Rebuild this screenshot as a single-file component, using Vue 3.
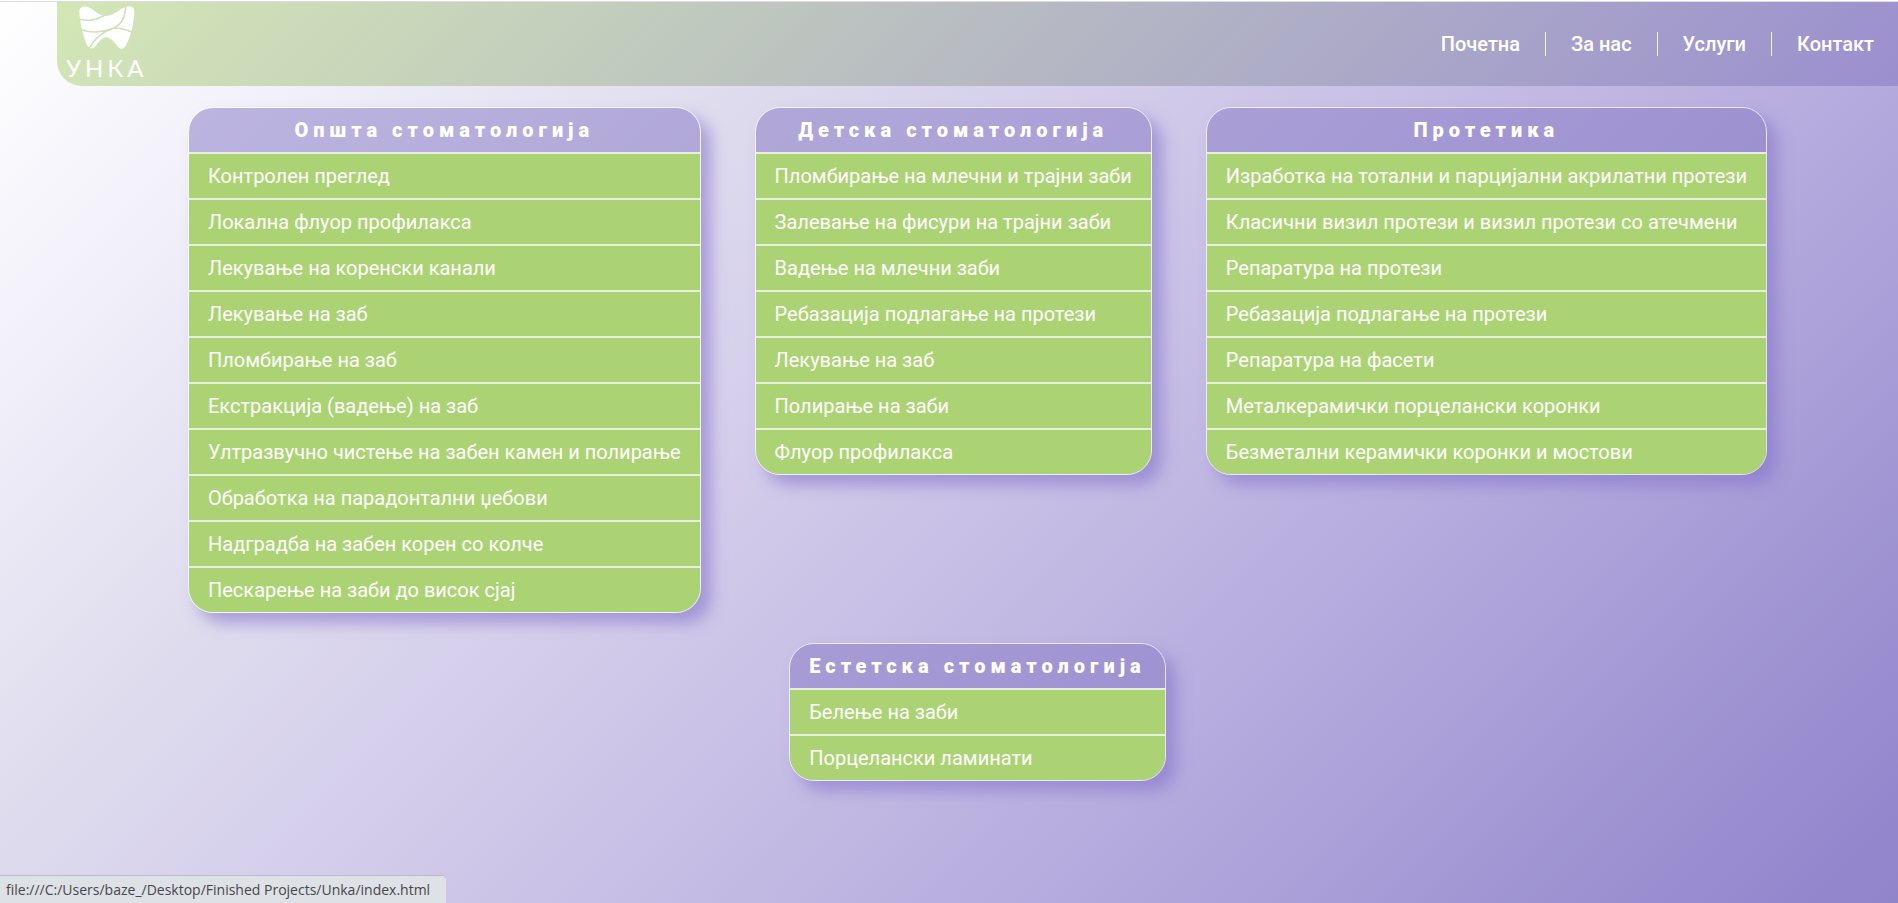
<script setup>
const links = ['Почетна', 'За нас', 'Услуги', 'Контакт']

const services = [
  {
    title: 'Општа стоматологија',
    items: [
      'Контролен преглед',
      'Локална флуор профилакса',
      'Лекување на коренски канали',
      'Лекување на заб',
      'Пломбирање на заб',
      'Екстракција (вадење) на заб',
      'Ултразвучно чистење на забен камен и полирање',
      'Обработка на парадонтални џебови',
      'Надградба на забен корен со колче',
      'Пескарење на заби до висок сјај',
    ],
  },
  {
    title: 'Детска стоматологија',
    items: [
      'Пломбирање на млечни и трајни заби',
      'Залевање на фисури на трајни заби',
      'Вадење на млечни заби',
      'Ребазација подлагање на протези',
      'Лекување на заб',
      'Полирање на заби',
      'Флуор профилакса',
    ],
  },
  {
    title: 'Протетика',
    items: [
      'Изработка на тотални и парцијални акрилатни протези',
      'Класични визил протези и визил протези со атечмени',
      'Репаратура на протези',
      'Ребазација подлагање на протези',
      'Репаратура на фасети',
      'Металкерамички порцелански коронки',
      'Безметални керамички коронки и мостови',
    ],
  },
  {
    title: 'Естетска стоматологија',
    items: ['Белење на заби', 'Порцелански ламинати'],
  },
]
</script>

<template>
  <div class="page">
    <header class="header">
      <a href="#" class="logo">
        <svg class="tooth" viewBox="238 15 172 135" aria-hidden="true">
          <path
            class="tooth-body"
            d="M241 36 C240 22 252 17 266 21 C284 27 296 45 318 48 C346 50 362 22 388 19 C402 17 408 26 406 42 C404 68 398 104 381 136 C376 147 366 150 357 140 C346 128 336 112 321 112 C306 113 296 132 286 142 C280 148 272 147 266 138 C254 116 243 72 241 36 Z"
          />
          <path
            class="tooth-line"
            d="M240 57 C268 65 292 60 314 47 M380 16 C380 48 372 72 344 84 M244 88 C272 100 312 98 344 84 C310 98 286 114 271 146 M344 84 C362 84 380 88 398 96"
          />
        </svg>
        <span class="logo-name">УНКА</span>
      </a>
      <nav class="nav">
        <a v-for="link in links" :key="link" href="#" class="nav-link">{{ link }}</a>
      </nav>
    </header>

    <main class="services">
      <div v-for="group in services" :key="group.title" class="card">
        <table class="table">
          <thead>
            <tr><th scope="col">{{ group.title }}</th></tr>
          </thead>
          <tbody>
            <tr v-for="item in group.items" :key="item"><td>{{ item }}</td></tr>
          </tbody>
        </table>
      </div>
    </main>

    <div class="status">file:///C:/Users/baze_/Desktop/Finished Projects/Unka/index.html</div>
  </div>
</template>

<style>
body {
  margin: 0;
}
</style>

<style scoped>
.page {
  box-sizing: border-box;
  min-height: 100vh;
  padding-left: 3%;
  border-top: 1px solid #fff;
  font-family: Roboto, 'Noto Sans', sans-serif;
  font-size: 20px;
  color: #fff;
  background: linear-gradient(
    135deg,
    #fff 0%,
    #f1eff9 14%,
    #dfdcee 29%,
    #d4ceeb 42%,
    #b4a9dd 71%,
    #a196d3 85%,
    #9486cd 97%,
    #9185ca 100%
  );
  box-shadow: inset 0 1px #dcdcdf;
}

.header {
  display: flex;
  align-items: center;
  justify-content: space-between;
  box-sizing: border-box;
  height: 85px;
  padding: 0 24px 0 9px;
  border-top: 1px solid #dcdcdf;
  border-bottom-left-radius: 25px;
  background: linear-gradient(135deg, #d3e7b5, #9b8fcf);
}

.logo {
  display: flex;
  flex-direction: column;
  align-items: center;
  gap: 6px;
  padding-bottom: 4px;
  color: #fff;
  text-decoration: none;
}

.tooth {
  display: block;
  width: 58px;
  height: 45px;
}

.tooth-body {
  fill: #fff;
}

.tooth-line {
  fill: none;
  stroke: #d0e2b8;
  stroke-width: 5;
}

.logo-name {
  font-family: Lato, sans-serif;
  font-size: 24px;
  line-height: 24px;
  letter-spacing: 4px;
}

.nav {
  display: flex;
}

.nav-link {
  padding-left: 25px;
  font-weight: 500;
  line-height: 24px;
  color: #fff;
  text-decoration: none;
}

.nav-link:not(:last-child) {
  padding-right: 25px;
  border-right: 1px solid #e8f7c8;
}

.services {
  display: flex;
  flex-wrap: wrap;
  align-items: flex-start;
  justify-content: center;
  gap: 30px 54px;
  padding: 21px 0 40px;
}

.card {
  overflow: hidden;
  border: 1px solid rgba(255, 255, 255, 0.7);
  border-radius: 25px;
  box-shadow: 10px 10px 15px rgba(134, 117, 203, 0.6);
}

.table {
  border-collapse: separate;
  border-spacing: 0;
}

th,
td {
  height: 44px;
  padding: 0 19px;
  line-height: 24px;
  white-space: nowrap;
}

th {
  font-weight: 900;
  letter-spacing: 5px;
  text-align: center;
  background: rgba(132, 118, 196, 0.5);
}

td {
  border-top: 2px solid #e9efdf;
  background: #acd373;
}

.status {
  position: fixed;
  bottom: 0;
  left: 0;
  box-sizing: border-box;
  height: 28px;
  padding: 0 16px 0 6px;
  border-top: 1px solid #bdb8cf;
  border-top-right-radius: 4px;
  font-family: 'Open Sans', 'Noto Sans', sans-serif;
  font-size: 14px;
  line-height: 28px;
  color: #45474b;
  background: #dee1e6;
}
</style>
